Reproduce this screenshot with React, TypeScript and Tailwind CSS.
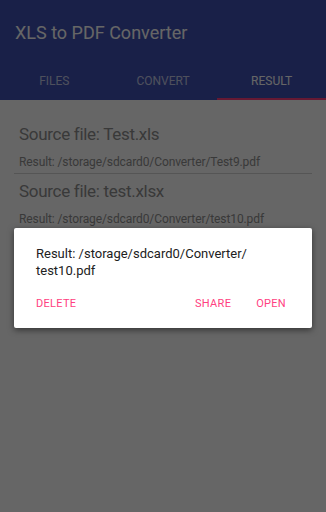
const font = { fontFamily: 'Roboto, "Liberation Sans", sans-serif' };

const results = [
  { source: 'Test.xls', path: '/storage/sdcard0/Converter/Test9.pdf' },
  { source: 'test.xlsx', path: '/storage/sdcard0/Converter/test10.pdf' },
];

const tabs = ['FILES', 'CONVERT', 'RESULT'];

export default function App() {
  return (
    <div className="relative w-[326px] h-[512px] overflow-hidden bg-white" style={font}>
      {/* App bar */}
      <header className="h-[100px] bg-[#3f51b5] flex flex-col">
        <div className="h-[60px] flex items-center pl-[15px] pt-[6px]">
          <h1 className="text-[18px] text-white leading-none">XLS to PDF Converter</h1>
        </div>
        <div className="flex-1 flex">
          {tabs.map((t, i) => (
            <div key={t} className="flex-1 flex flex-col">
              <div
                className={`flex-1 flex items-center justify-center pt-[4px] text-[12px] ${
                  i === 2 ? 'text-white' : 'text-white/70'
                }`}
              >
                {t}
              </div>
              <div className={`h-[2px] ${i === 2 ? 'bg-[#ff4081]' : ''}`} />
            </div>
          ))}
        </div>
      </header>

      {/* List */}
      <main className="px-[14px] pt-[17px]">
        {results.map((r, i) => (
          <div key={r.source} className={`pl-[5px] pt-[7px] ${i === 0 ? 'border-b border-[#d4d4d4] pb-[4px]' : ''}`}>
            <p className="text-[17px] tracking-[-0.3px] text-[#8f8f8f] leading-[20px]">Source file: {r.source}</p>
            <p className="mt-[11px] text-[12px] tracking-[-0.1px] text-[#8f8f8f] leading-[14px]">Result: {r.path}</p>
          </div>
        ))}
      </main>

      {/* Dim */}
      <div className="absolute inset-0 bg-black/60" />

      {/* Dialog */}
      <div className="absolute left-[14px] top-[228px] w-[298px] h-[100px] bg-white rounded-[2px] shadow-[0_2px_6px_rgba(0,0,0,0.5)] flex flex-col">
        <p className="pl-[22px] pt-[17px] text-[13px] leading-[17px] text-[#212121]">
          Result: /storage/sdcard0/Converter/
          <br />
          test10.pdf
        </p>
        <div className="flex items-center mt-auto mb-[17px] pl-[22px] pr-[26px] text-[11px] text-[#ff4081] tracking-[0.3px] leading-[14px]">
          <span>DELETE</span>
          <span className="ml-auto">SHARE</span>
          <span className="ml-[25px]">OPEN</span>
        </div>
      </div>
    </div>
  );
}
